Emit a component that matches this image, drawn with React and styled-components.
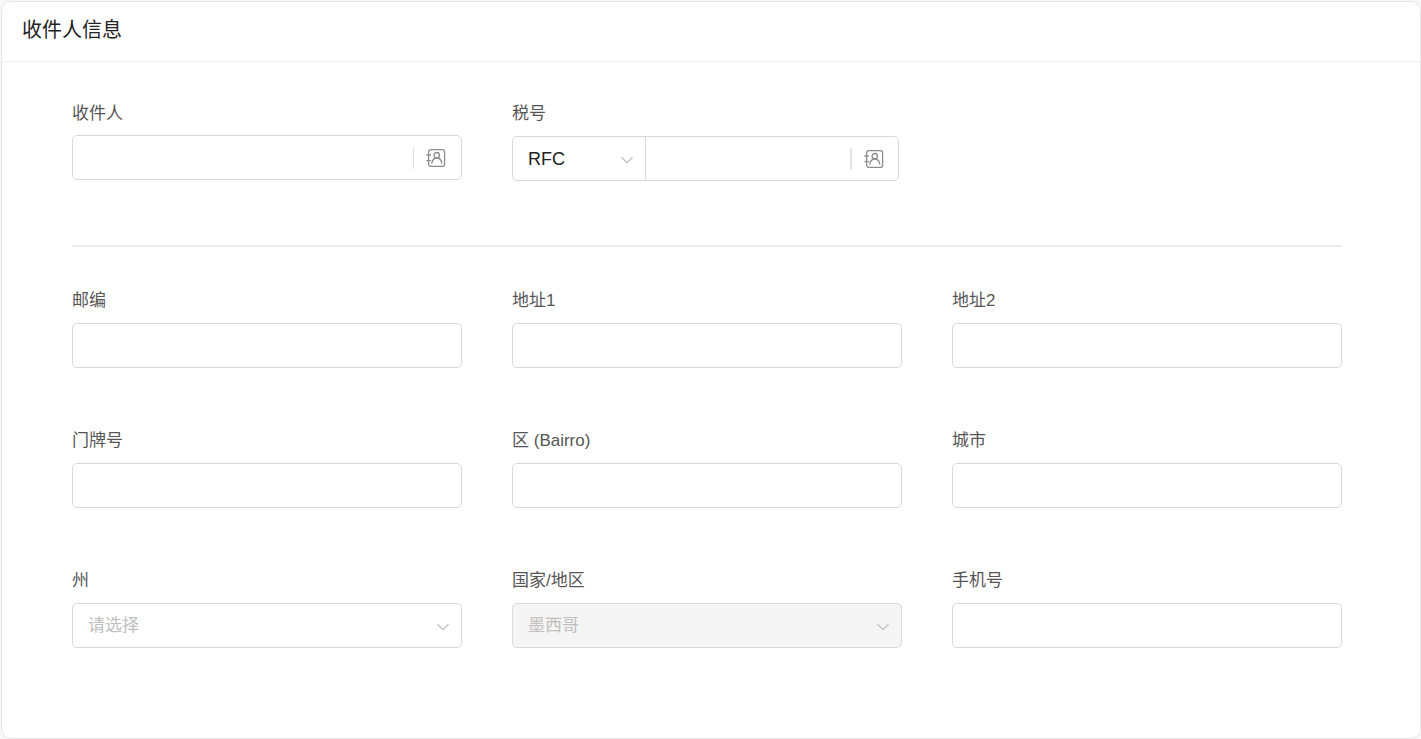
import React, { useState } from "react";
import styled, { createGlobalStyle } from "styled-components";

const GlobalStyle = createGlobalStyle`
  * {
    box-sizing: border-box;
  }

  body {
    margin: 0;
    background: #f7f7f8;
    font-family: "Liberation Sans", "Noto Sans CJK SC", sans-serif;
  }
`;

const SCard = styled.section`
  min-height: calc(100vh - 1px);
  margin: 1px 0 0 1px;
  background: #fff;
  border: 1px solid #e6e6e6;
  border-radius: 10px;
`;

const SHeader = styled.header`
  padding: 12px 20px 15px;
  border-bottom: 1px solid #eee;
`;

const STitle = styled.h2`
  margin: 0;
  color: #222;
  font-size: 20px;
  font-weight: 400;
  line-height: 32px;
`;

const SForm = styled.form`
  padding: 40px 78px 90px 70px;
`;

const SGrid = styled.div`
  display: grid;
  grid-template-columns: repeat(3, minmax(0, 1fr));
  gap: 61px 50px;
`;

const SDivider = styled.hr`
  height: 2px;
  margin: 64px 0 42px;
  border: 0;
  background: #ebebeb;
`;

const SField = styled.div`
  display: flex;
  flex-direction: column;
  gap: ${({ $compact }) => ($compact ? "9px" : "10px")};
`;

const SLabel = styled.label`
  color: #555;
  font-size: 17px;
  line-height: 24px;
`;

const SBox = styled.div`
  display: flex;
  align-items: center;
  height: 45px;
  margin-right: ${({ $grouped }) => ($grouped ? "3px" : "0")};
  background: ${({ $disabled }) => ($disabled ? "#f5f5f5" : "#fff")};
  border: 1px solid #d9d9d9;
  border-radius: 5px;
  overflow: hidden;

  &:focus-within {
    border-color: #999;
  }
`;

const SInput = styled.input`
  flex: 1;
  min-width: 0;
  height: 100%;
  padding: 0 15px;
  color: #222;
  font: inherit;
  font-size: 17px;
  background: transparent;
  border: 0;
  outline: 0;
`;

const SSelectWrap = styled.div`
  position: relative;
  flex: ${({ $prefix }) => ($prefix ? "0 0 133px" : "1")};
  height: 100%;
  border-right: ${({ $prefix }) => ($prefix ? "1px solid #d9d9d9" : "0")};
`;

const SSelect = styled.select`
  width: 100%;
  height: 100%;
  padding: 0 36px 0 15px;
  color: ${({ $muted }) => ($muted ? "#bfbfbf" : "#222")};
  font: inherit;
  font-size: ${({ $latin }) => ($latin ? "18px" : "17px")};
  background: transparent;
  border: 0;
  outline: 0;
  opacity: 1;
  appearance: none;
`;

const SArrow = styled.svg`
  position: absolute;
  top: 19px;
  right: 11px;
  width: 14px;
  height: 8px;
  pointer-events: none;
`;

const SBookButton = styled.button`
  display: flex;
  align-items: center;
  justify-content: center;
  width: 48px;
  height: 22px;
  padding: 0 3px 0 0;
  background: none;
  border: 0;
  border-left: ${({ $thick }) => ($thick ? "2px" : "1px")} solid #e3e3e3;
  cursor: pointer;
`;

const Arrow = () => (
  <SArrow viewBox="0 0 14 8" fill="none" stroke="#bfbfbf" strokeWidth="1.3">
    <path d="M1.5 1.2 7 6.7l5.5-5.5" />
  </SArrow>
);

const BookIcon = () => (
  <svg
    width="20"
    height="20"
    viewBox="0 0 20 20"
    fill="none"
    stroke="#8c8c8c"
    strokeWidth="1.3"
    strokeLinecap="round"
  >
    <rect x="2.6" y="1.6" width="16" height="16.8" rx="2.5" />
    <path d="M.8 7h3.6M.8 12.600h3.600" />
    <circle cx="10.8" cy="7.2" r="2.7" />
    <path d="M5.8 15.200c.5-3.200 2.400-5.200 5-5.200s4.500 2 5 5.200" />
  </svg>
);

const TextItem = ({ id, label, book }) => (
  <SField $compact={book}>
    <SLabel htmlFor={id}>{label}</SLabel>
    <SBox>
      <SInput id={id} name={id} type="text" />
      {book && (
        <SBookButton type="button">
          <BookIcon />
        </SBookButton>
      )}
    </SBox>
  </SField>
);

export default function App() {
  const [taxType, setTaxType] = useState("RFC");
  const [state, setState] = useState("");

  return (
    <>
      <GlobalStyle />
      <SCard>
        <SHeader>
          <STitle>收件人信息</STitle>
        </SHeader>
        <SForm>
          <SGrid>
            <TextItem id="recipient" label="收件人" book />
            <SField>
              <SLabel id="taxLabel" htmlFor="taxNumber">
                税号
              </SLabel>
              <SBox $grouped>
                <SSelectWrap $prefix>
                  <SSelect
                    id="taxType"
                    aria-labelledby="taxLabel"
                    $latin
                    value={taxType}
                    onChange={(e) => setTaxType(e.target.value)}
                  >
                    <option value="RFC">RFC</option>
                  </SSelect>
                  <Arrow />
                </SSelectWrap>
                <SInput id="taxNumber" name="taxNumber" type="text" />
                <SBookButton type="button" $thick>
                  <BookIcon />
                </SBookButton>
              </SBox>
            </SField>
          </SGrid>
          <SDivider />
          <SGrid>
            <TextItem id="zip" label="邮编" />
            <TextItem id="address1" label="地址1" />
            <TextItem id="address2" label="地址2" />
            <TextItem id="houseNumber" label="门牌号" />
            <TextItem id="district" label="区 (Bairro)" />
            <TextItem id="city" label="城市" />
            <SField>
              <SLabel htmlFor="state">州</SLabel>
              <SBox>
                <SSelectWrap>
                  <SSelect
                    id="state"
                    $muted
                    value={state}
                    onChange={(e) => setState(e.target.value)}
                  >
                    <option value="">请选择</option>
                  </SSelect>
                  <Arrow />
                </SSelectWrap>
              </SBox>
            </SField>
            <SField>
              <SLabel htmlFor="country">国家/地区</SLabel>
              <SBox $disabled>
                <SSelectWrap>
                  <SSelect id="country" $muted disabled defaultValue="MX">
                    <option value="MX">墨西哥</option>
                  </SSelect>
                  <Arrow />
                </SSelectWrap>
              </SBox>
            </SField>
            <TextItem id="phone" label="手机号" />
          </SGrid>
        </SForm>
      </SCard>
    </>
  );
}
